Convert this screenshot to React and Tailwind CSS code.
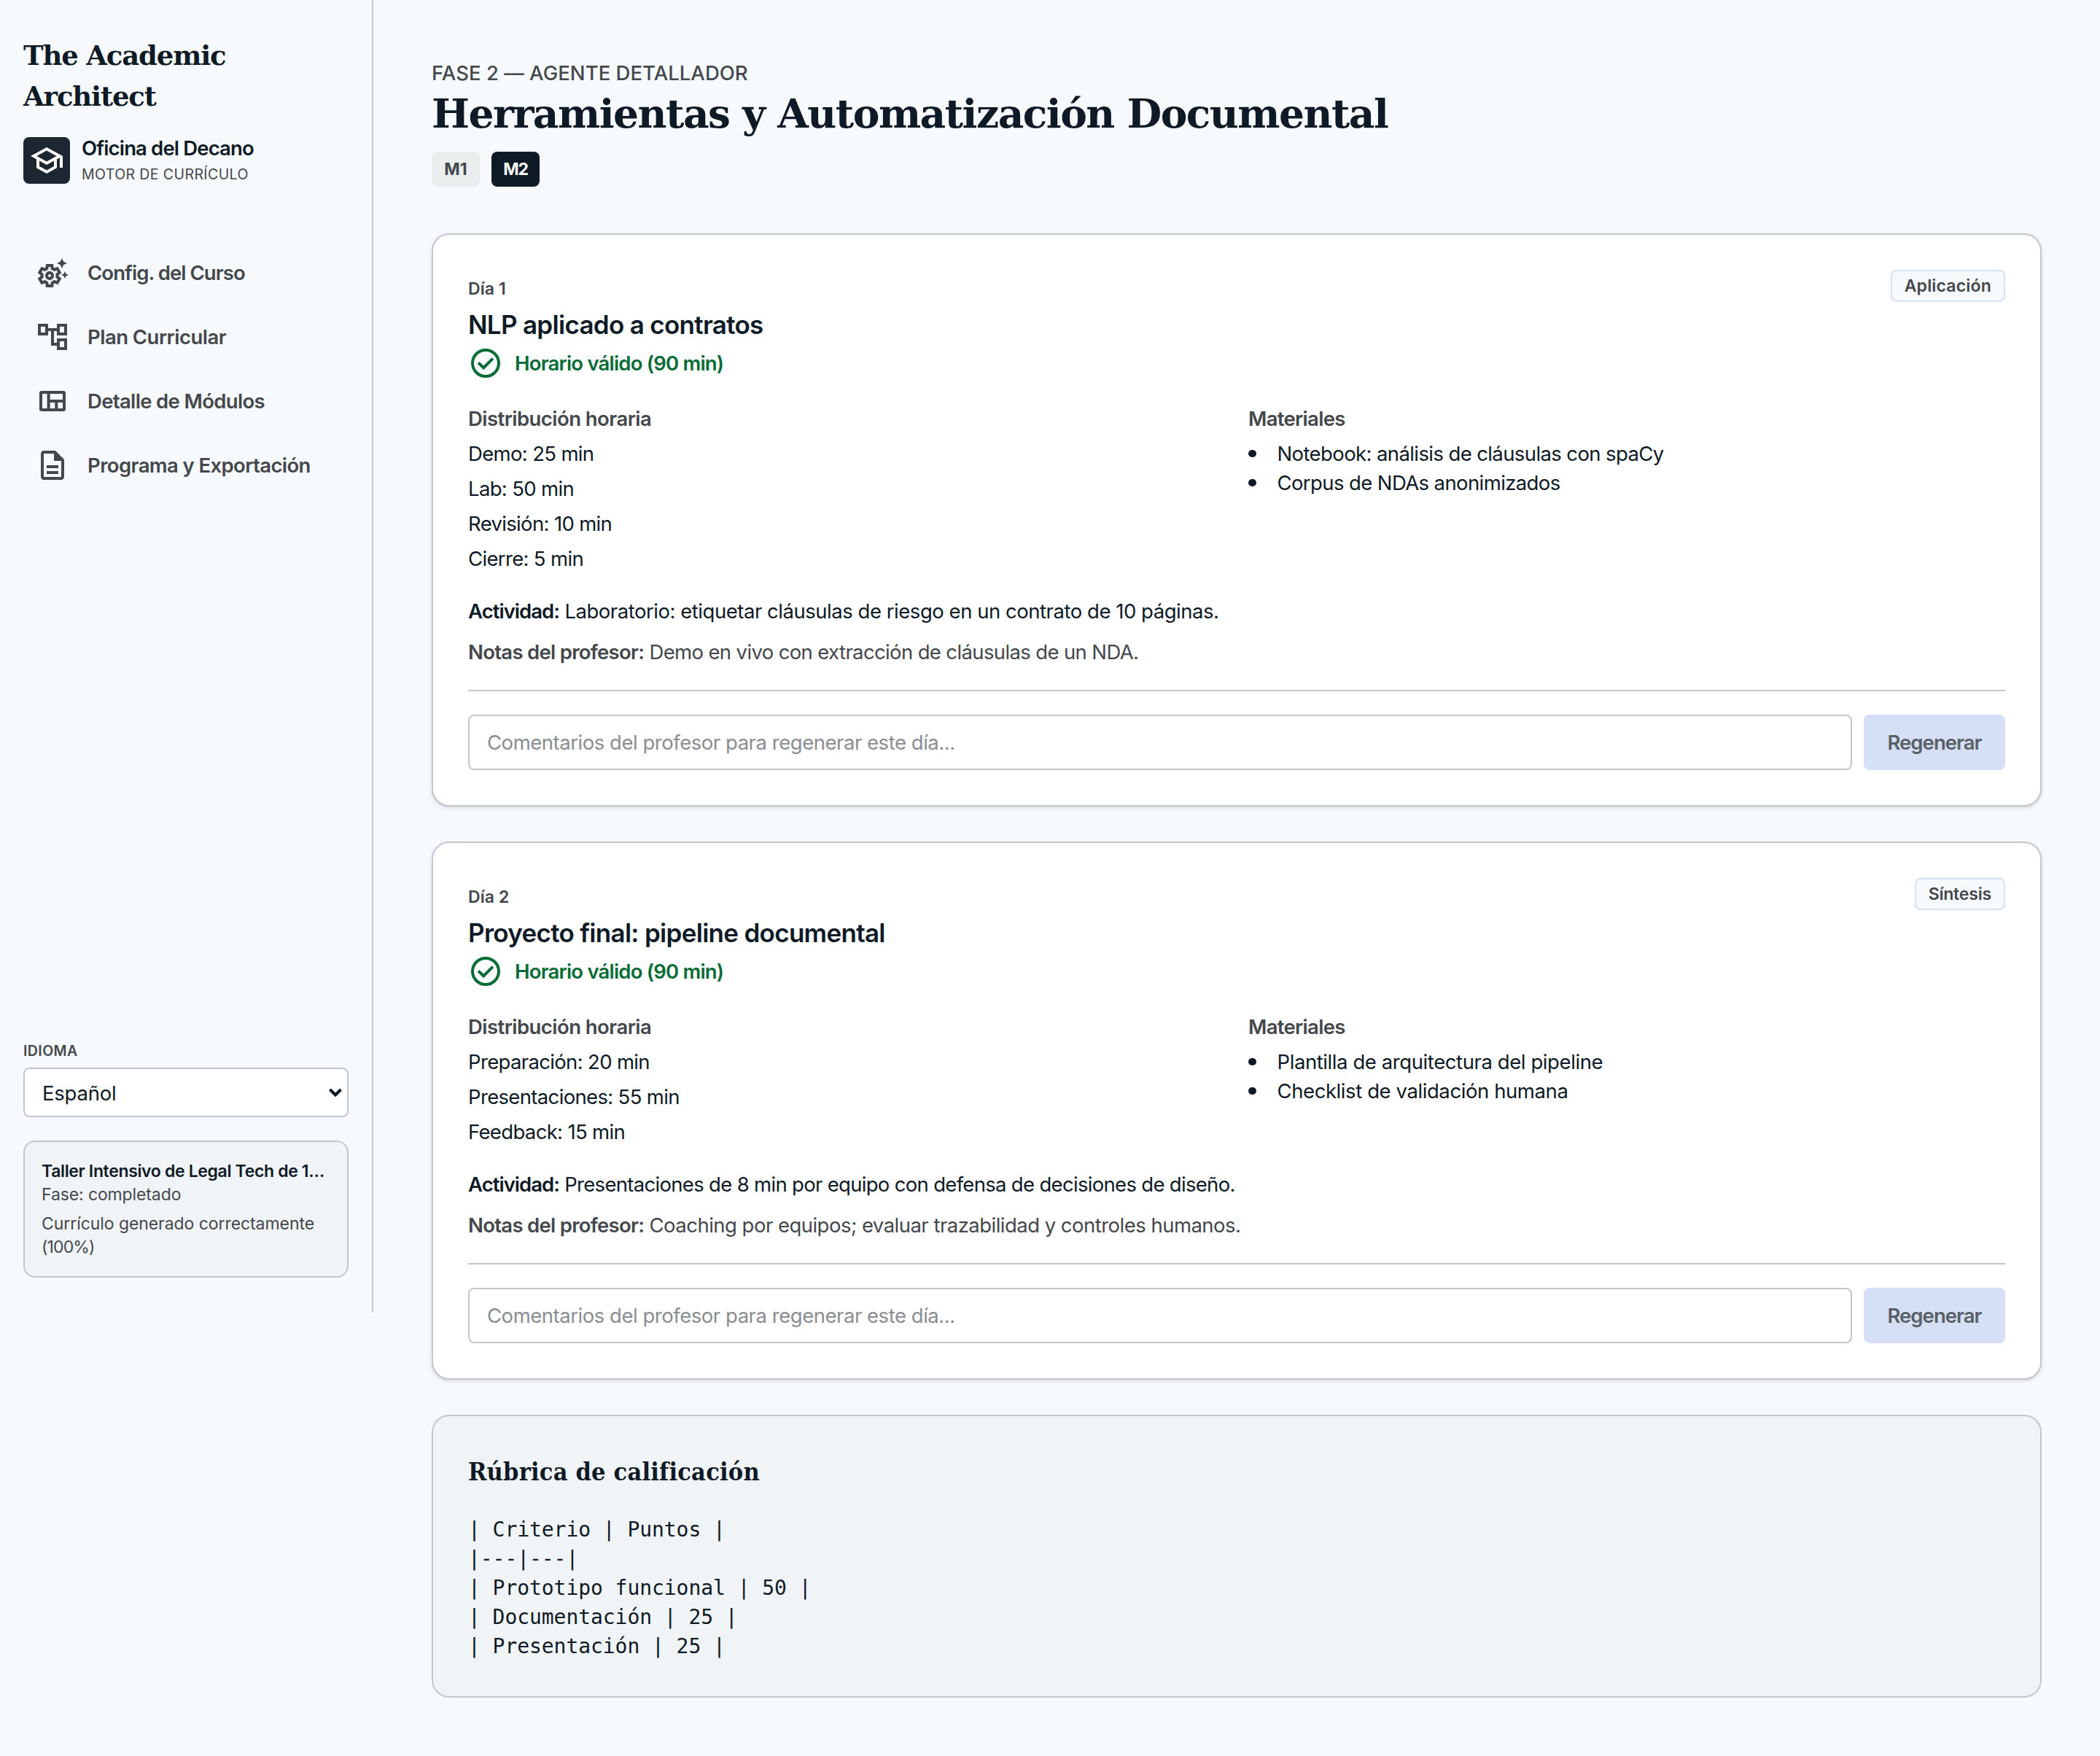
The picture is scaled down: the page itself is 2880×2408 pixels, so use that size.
import { useState } from "react";
import {
  MdOutlineAccountTree,
  MdOutlineDescription,
  MdOutlineSchool,
  MdOutlineSettingsSuggest,
} from "react-icons/md";

const MODULES = ["M1", "M2"];

const DAYS = [
  {
    day: 1,
    title: "NLP aplicado a contratos",
    tag: "Aplicación",
    tagTrack: "tracking-[0.008em]",
    status: "Horario válido (90 min)",
    schedule: ["Demo: 25 min", "Lab: 50 min", "Revisión: 10 min", "Cierre: 5 min"],
    materials: ["Notebook: análisis de cláusulas con spaCy", "Corpus de NDAs anonimizados"],
    materialsTrack: "tracking-[-0.022em]",
    activity: "Laboratorio: etiquetar cláusulas de riesgo en un contrato de 10 páginas.",
    activityTrack: "tracking-[-0.017em]",
    notes: "Demo en vivo con extracción de cláusulas de un NDA.",
    notesTrack: "tracking-[-0.023em]",
  },
  {
    day: 2,
    title: "Proyecto final: pipeline documental",
    tag: "Síntesis",
    tagTrack: "tracking-[-0.008em]",
    status: "Horario válido (90 min)",
    schedule: ["Preparación: 20 min", "Presentaciones: 55 min", "Feedback: 15 min"],
    materials: ["Plantilla de arquitectura del pipeline", "Checklist de validación humana"],
    materialsTrack: "tracking-[-0.015em]",
    activity: "Presentaciones de 8 min por equipo con defensa de decisiones de diseño.",
    activityTrack: "tracking-[-0.025em]",
    notes: "Coaching por equipos; evaluar trazabilidad y controles humanos.",
    notesTrack: "tracking-[-0.019em]",
  },
];

const RUBRIC = `| Criterio | Puntos |
|---|---|
| Prototipo funcional | 50 |
| Documentación | 25 |
| Presentación | 25 |`;

function QuiltIcon({ className }) {
  return (
    <svg viewBox="0 0 24 24" fill="currentColor" fillRule="evenodd" className={className}>
      <path d="M4.5 5h15A1.5 1.5 0 0 1 21 6.5v11a1.5 1.5 0 0 1-1.5 1.5h-15A1.5 1.5 0 0 1 3 17.5v-11A1.5 1.5 0 0 1 4.5 5zM5 7v10h3.3V7zm5.3 0v4H19V7zm0 6v4h3.35v-4zm5.35 0v4H19v-4z" />
    </svg>
  );
}

function CheckIcon({ className }) {
  return (
    <svg viewBox="0 0 24 24" className={className}>
      <circle cx="12" cy="12" r="9" fill="none" stroke="currentColor" strokeWidth="2" />
      <path fill="currentColor" d="m10.6 16.6 7.05-7.05-1.4-1.4-5.65 5.65-2.85-2.85-1.4 1.4z" />
    </svg>
  );
}

const NAV = [
  { label: "Config. del Curso", icon: MdOutlineSettingsSuggest, track: "tracking-[-0.034em]" },
  { label: "Plan Curricular", icon: MdOutlineAccountTree, track: "tracking-[-0.019em]" },
  { label: "Detalle de Módulos", icon: QuiltIcon, track: "tracking-[-0.024em]" },
  { label: "Programa y Exportación", icon: MdOutlineDescription, track: "tracking-[-0.022em]" },
];

function Sidebar() {
  const [lang, setLang] = useState("es");

  return (
    <aside className="flex h-[1800px] w-[512px] shrink-0 flex-col border-r-2 border-[#c4c6cd] px-8 pt-12 pb-12">
      <div className="font-['DejaVu_Serif',serif] text-[37px] leading-[56px] font-bold tracking-[-0.031em]">
        The Academic
        <br />
        Architect
      </div>

      <div className="mt-6 flex items-center gap-4">
        <div className="flex size-16 items-center justify-center rounded-lg bg-[#1d2731] text-white">
          <MdOutlineSchool className="size-12" />
        </div>
        <div>
          <div className="leading-[38px] font-semibold tracking-[-0.031em]">Oficina del Decano</div>
          <div className="text-[19.5px] leading-[34px] tracking-[0.021em] text-[#44474c]">
            MOTOR DE CURRÍCULO
          </div>
        </div>
      </div>

      <nav className="mt-[82px] flex flex-col gap-4">
        {NAV.map(({ label, icon: Icon, track }) => (
          <a key={label} className="flex h-18 items-center gap-6 px-4 text-[#44474c]">
            <Icon className="size-12 shrink-0" />
            <span className={`font-semibold ${track}`}>{label}</span>
          </a>
        ))}
      </nav>

      <div className="mt-auto">
        <label className="block text-[19.5px] leading-7 font-semibold tracking-[0.022em] text-[#44474c]">
          IDIOMA
        </label>
        <div className="relative mt-[9px]">
          <select
            value={lang}
            onChange={(e) => setLang(e.target.value)}
            className="block h-[68px] w-full appearance-none rounded-lg border-2 border-[#c4c6cd] bg-white px-6 pt-px tracking-[-0.008em]"
          >
            <option value="es">Español</option>
            <option value="en">English</option>
          </select>
          <svg viewBox="0 0 18 12" className="absolute top-7 right-[9px] h-3 w-[18px]">
            <path d="M1.5 2 9 9.5 16.5 2" fill="none" stroke="currentColor" strokeWidth="4" />
          </svg>
        </div>

        <div className="mt-8 rounded-2xl border-2 border-[#c4c6cd] bg-[#f0f4f7] py-6 pr-5 pl-[23px] text-[23px] leading-8 text-[#44474c]">
          <div className="font-semibold tracking-[-0.015em] whitespace-nowrap text-[#0e1a26]">
            Taller Intensivo de Legal Tech de 1…
          </div>
          <div className="tracking-[-0.005em]">Fase: completado</div>
          <div className="mt-2 tracking-[-0.003em]">
            Currículo generado correctamente
            <br />
            <span className="tracking-[-0.038em]">(100%)</span>
          </div>
        </div>
      </div>
    </aside>
  );
}

function DayCard({ item }) {
  const [comment, setComment] = useState("");

  return (
    <section className="rounded-3xl border-2 border-[#c4c6cd] bg-white p-12 shadow-[0_2px_6px_rgba(0,0,0,0.1),0_2px_4px_-2px_rgba(0,0,0,0.1)]">
      <div className="flex items-start justify-between">
        <div className="pt-[10px]">
          <div className="text-[23px] leading-8 font-semibold tracking-[0.005em] text-[#44474c]">
            Día {item.day}
          </div>
          <h3 className="mt-[11px] text-[35px] leading-[44px] font-semibold tracking-[-0.02em]">
            {item.title}
          </h3>
          <div className="mt-[7px] flex h-12 items-center gap-4 font-semibold tracking-[-0.029em] text-[#046c35]">
            <CheckIcon className="size-12" />
            {item.status}
          </div>
        </div>
        <span
          className={`flex h-11 items-center rounded-lg border-2 border-[#d5e0f7] bg-[#f6fafd] px-[17px] text-[23px] font-semibold text-[#44474c] ${item.tagTrack}`}
        >
          {item.tag}
        </span>
      </div>

      <div className="mt-8 grid grid-cols-2 gap-8">
        <div className="flex flex-col gap-2">
          <div className="font-semibold tracking-[-0.02em] text-[#44474c]">Distribución horaria</div>
          {item.schedule.map((s) => (
            <div key={s} className="tracking-[-0.024em]">
              {s}
            </div>
          ))}
        </div>
        <div>
          <div className="font-semibold tracking-[-0.025em] text-[#44474c]">Materiales</div>
          <ul className={`mt-2 ${item.materialsTrack}`}>
            {item.materials.map((m) => (
              <li key={m} className="flex items-center">
                <span className="mr-[29px] size-[10.5px] rounded-full bg-current" />
                {m}
              </li>
            ))}
          </ul>
        </div>
      </div>

      <p className={`mt-8 ${item.activityTrack}`}>
        <strong className="font-semibold tracking-[-0.035em]">Actividad:</strong> {item.activity}
      </p>
      <p className={`mt-4 text-[#44474c] ${item.notesTrack}`}>
        <strong className="font-semibold tracking-[-0.026em]">Notas del profesor:</strong> {item.notes}
      </p>

      <div className="mt-8 flex gap-4 border-t-2 border-[#c4c6cd] pt-8">
        <input
          value={comment}
          onChange={(e) => setComment(e.target.value)}
          placeholder="Comentarios del profesor para regenerar este día..."
          className="h-[76px] flex-1 rounded-lg border-2 border-[#c4c6cd] bg-white px-6 tracking-[-0.017em] placeholder:text-[#8a8d91]"
        />
        <button
          disabled={!comment}
          className="h-[76px] w-[194px] rounded-lg bg-[#d5dff6] font-semibold tracking-[-0.035em] text-[#596065]"
        >
          Regenerar
        </button>
      </div>
    </section>
  );
}

export default function App() {
  const [module, setModule] = useState("M2");

  return (
    <div className="flex min-h-[2408px] items-start bg-[#f6fafd] font-['Inter',sans-serif] text-[27.5px] leading-10 text-[#0e1a26]">
      <Sidebar />

      <main className="flex-1 px-20 pt-20 pb-20">
        <div className="font-medium tracking-[0.001em] text-[#44474c]">
          FASE 2 — AGENTE DETALLADOR
        </div>
        <h1 className="font-['DejaVu_Serif',serif] text-[55px] leading-[72px] font-bold tracking-[-0.0275em]">
          Herramientas y Automatización Documental
        </h1>
        <div className="mt-4 flex gap-4">
          {MODULES.map((m) => (
            <button
              key={m}
              onClick={() => setModule(m)}
              className={
                m === module
                  ? "h-12 w-[66px] rounded-lg bg-[#0e1a26] text-[23px] leading-8 font-bold tracking-[-0.05em] text-white"
                  : "h-12 w-[66px] rounded-lg bg-[#eaeeef] text-[23px] leading-8 font-bold text-[#44474c]"
              }
            >
              {m}
            </button>
          ))}
        </div>

        <div className="mt-16 flex flex-col gap-12">
          {DAYS.map((d) => (
            <DayCard key={d.day} item={d} />
          ))}

          <section className="rounded-3xl border-2 border-[#c4c6cd] bg-[#f0f4f7] p-12">
            <h2 className="font-['DejaVu_Serif_Condensed','DejaVu_Serif',serif] text-[34px] leading-[56px] font-bold tracking-[0.006em] font-stretch-condensed">
              Rúbrica de calificación
            </h2>
            <pre className="mt-8 font-['DejaVu_Sans_Mono',monospace] text-[28px] leading-10 tracking-[-0.002em]">
              {RUBRIC}
            </pre>
          </section>
        </div>
      </main>
    </div>
  );
}
